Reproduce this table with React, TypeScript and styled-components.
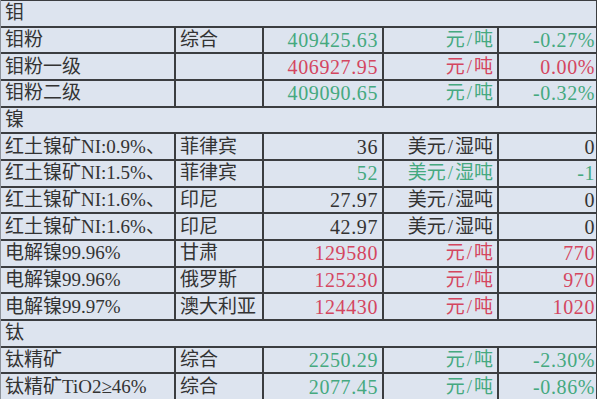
import React from "react";
import styled, { createGlobalStyle } from "styled-components";

const Global = createGlobalStyle`
  html, body { margin: 0; padding: 0; background: #ffffff; }
  body { width: 600px; height: 400px; overflow: hidden; }
`;

type Tone = "dark" | "green" | "red";

const toneColor: Record<Tone, string> = {
  dark: "#333333",
  green: "#45a97f",
  red: "#d4465f",
};

const Sheet = styled.div`
  display: grid;
  grid-template-columns: 173px 86px 118px 113px 97px;
  grid-auto-rows: 24.67px;
  gap: 2px;
  width: 597px;
  box-sizing: border-box;
  padding: 1px 2px 0 0;
  border-left: 1px solid #8e939b;
  background: #3b3d40;
  font-family: "Liberation Serif", "Noto Sans CJK SC", serif;
  font-size: 19px;
`;

const Cell = styled.div<{ $tone?: Tone; $align?: "left" | "right"; $last?: boolean; $num?: boolean }>`
  background: #dde4ef;
  color: ${(p) => toneColor[p.$tone ?? "dark"]};
  display: flex;
  align-items: center;
  justify-content: ${(p) => (p.$align === "right" ? "flex-end" : "flex-start")};
  padding: ${(p) => (p.$align === "right" ? (p.$last ? "0 1px 0 0" : "0 4px 0 0") : "0 0 0 4px")};
  line-height: 24px;
  white-space: nowrap;
  overflow: hidden;
  font-size: ${(p) => (p.$num ? "20px" : "19px")};
  letter-spacing: ${(p) => (p.$num ? "0.6px" : "0")};
`;

const Section = styled(Cell)`
  grid-column: 1 / -1;
`;

const Slash = styled.span`
  padding: 0 2px;
`;

type Row = {
  name: string;
  origin: string;
  price: string;
  unit: string;
  change: string;
  tone: Tone;
};

type Block = { title: string; rows: Row[] };

const data: Block[] = [
  {
    title: "钼",
    rows: [
      { name: "钼粉", origin: "综合", price: "409425.63", unit: "元/吨", change: "-0.27%", tone: "green" },
      { name: "钼粉一级", origin: "", price: "406927.95", unit: "元/吨", change: "0.00%", tone: "red" },
      { name: "钼粉二级", origin: "", price: "409090.65", unit: "元/吨", change: "-0.32%", tone: "green" },
    ],
  },
  {
    title: "镍",
    rows: [
      { name: "红土镍矿NI:0.9%、", origin: "菲律宾", price: "36", unit: "美元/湿吨", change: "0", tone: "dark" },
      { name: "红土镍矿NI:1.5%、", origin: "菲律宾", price: "52", unit: "美元/湿吨", change: "-1", tone: "green" },
      { name: "红土镍矿NI:1.6%、", origin: "印尼", price: "27.97", unit: "美元/湿吨", change: "0", tone: "dark" },
      { name: "红土镍矿NI:1.6%、", origin: "印尼", price: "42.97", unit: "美元/湿吨", change: "0", tone: "dark" },
      { name: "电解镍99.96%", origin: "甘肃", price: "129580", unit: "元/吨", change: "770", tone: "red" },
      { name: "电解镍99.96%", origin: "俄罗斯", price: "125230", unit: "元/吨", change: "970", tone: "red" },
      { name: "电解镍99.97%", origin: "澳大利亚", price: "124430", unit: "元/吨", change: "1020", tone: "red" },
    ],
  },
  {
    title: "钛",
    rows: [
      { name: "钛精矿", origin: "综合", price: "2250.29", unit: "元/吨", change: "-2.30%", tone: "green" },
      { name: "钛精矿TiO2≥46%", origin: "综合", price: "2077.45", unit: "元/吨", change: "-0.86%", tone: "green" },
    ],
  },
];

function Unit({ text }: { text: string }) {
  const [a, b] = text.split("/");
  return (
    <>
      {a}
      <Slash>/</Slash>
      {b}
    </>
  );
}

export default function App() {
  return (
    <>
      <Global />
      <Sheet>
        {data.map((block) => (
          <React.Fragment key={block.title}>
            <Section>{block.title}</Section>
            {block.rows.map((r, i) => (
              <React.Fragment key={block.title + i}>
                <Cell>{r.name}</Cell>
                <Cell>{r.origin}</Cell>
                <Cell $align="right" $tone={r.tone} $num>{r.price}</Cell>
                <Cell $align="right" $tone={r.tone}>
                  <Unit text={r.unit} />
                </Cell>
                <Cell $align="right" $tone={r.tone} $last $num>{r.change}</Cell>
              </React.Fragment>
            ))}
          </React.Fragment>
        ))}
      </Sheet>
    </>
  );
}
